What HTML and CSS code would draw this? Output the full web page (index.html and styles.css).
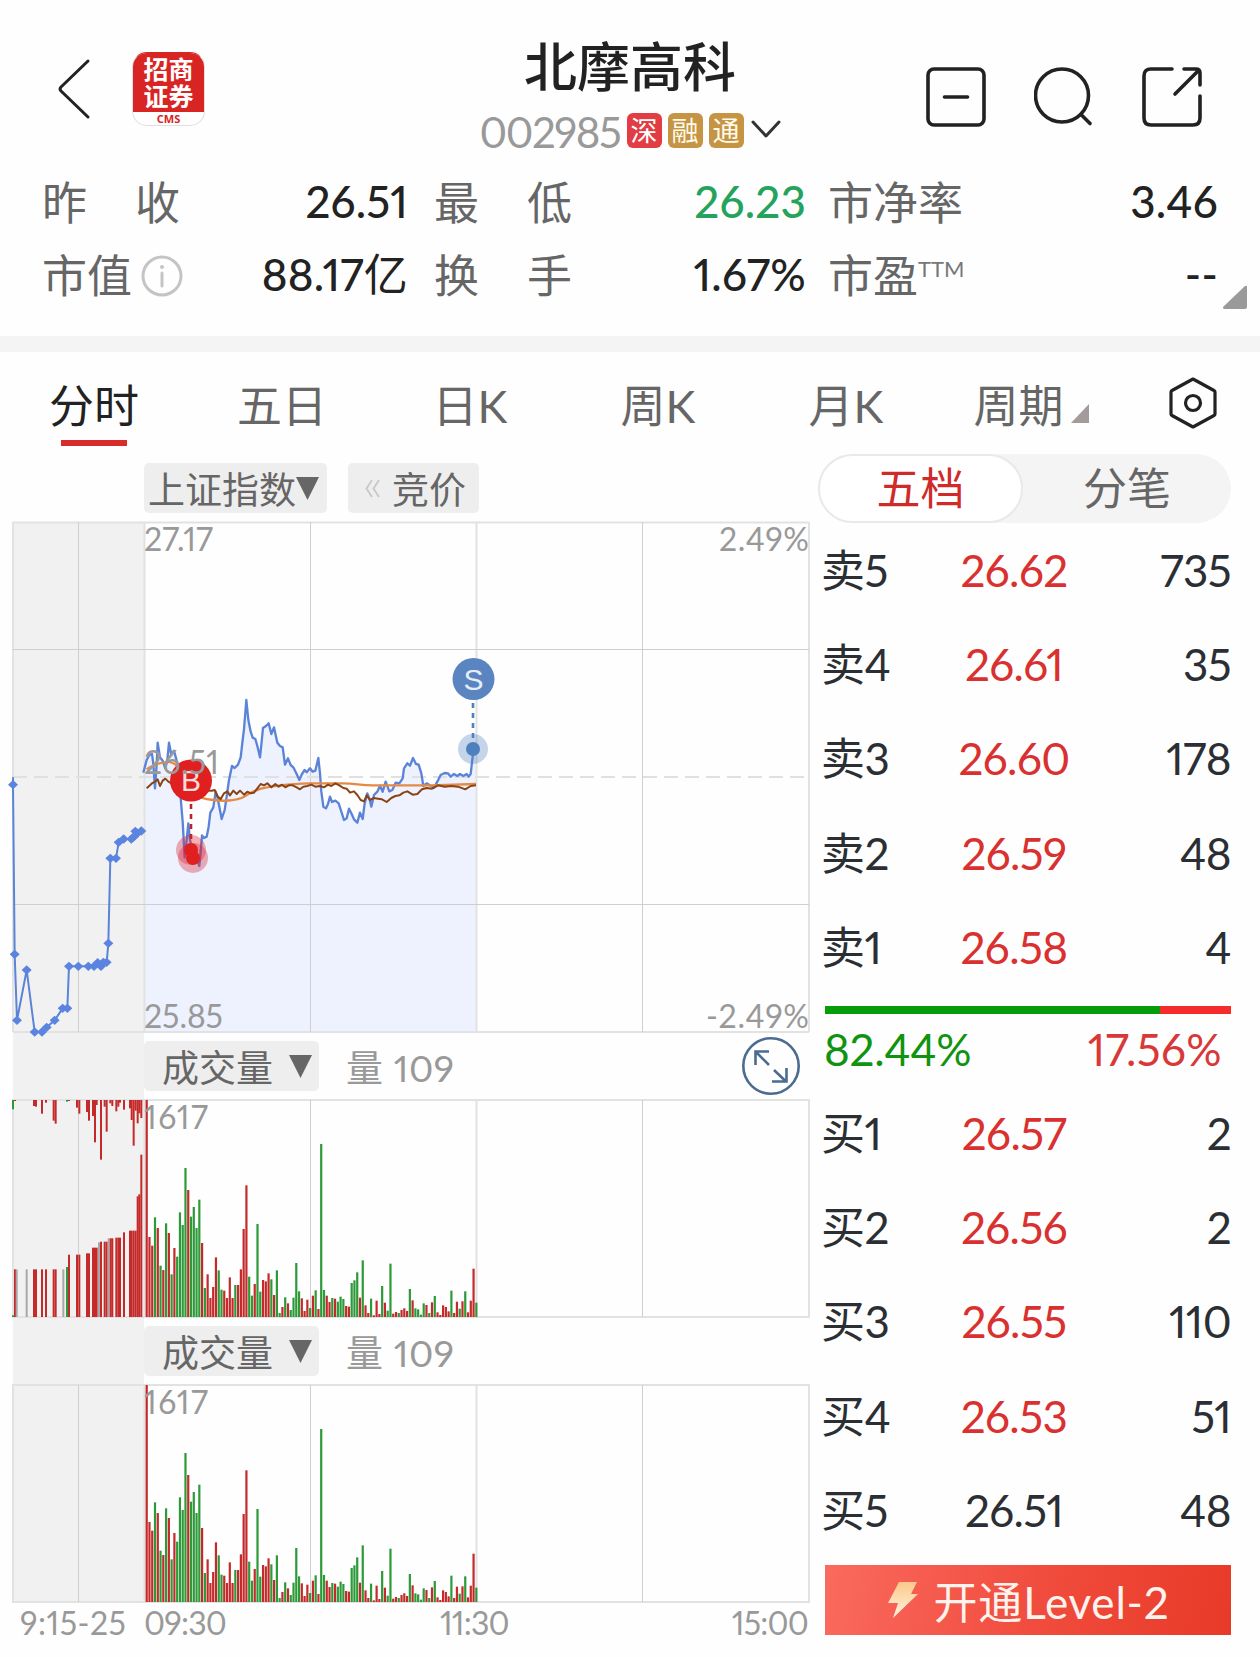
FILE: index.html
```html
<!DOCTYPE html>
<html lang="zh-CN">
<head>
    <meta charset="UTF-8">
    <meta name="viewport" content="width=device-width, initial-scale=1.0">
    <title>北摩高科 002985</title>
    <link rel="stylesheet" href="styles.css">
</head>
<body>
    <header class="topbar">
        <div class="topbar-left">
            <svg class="back" width="34" height="62" viewBox="0 0 34 62" fill="none" stroke="#222" stroke-width="3" stroke-linecap="round" stroke-linejoin="round"><path d="M31 3 L4 29 Q2 31 4 33 L31 59"/></svg>
            <div class="logo">
                <div class="logo-name">招商<br>证券</div>
                <div class="logo-cms">CMS</div>
            </div>
        </div>
        <div class="topbar-title">
            <h1>北摩高科</h1>
            <div class="code-row">
                <span class="code">002985</span>
                <span class="badge badge-red">深</span>
                <span class="badge">融</span>
                <span class="badge">通</span>
                <svg class="chevron" width="30" height="20" viewBox="0 0 30 20" fill="none" stroke="#333" stroke-width="3" stroke-linecap="round" stroke-linejoin="round"><path d="M2 2 L15 16 L28 2"/></svg>
            </div>
        </div>
        <div class="topbar-icons">
            <svg width="62" height="62" viewBox="0 0 62 62" fill="none" stroke="#222" stroke-width="3.6" stroke-linecap="round"><rect x="2" y="3" width="56" height="56" rx="6"/><path d="M18.500 31 H41.500"/></svg>
            <svg width="62" height="62" viewBox="0 0 62 62" fill="none" stroke="#222" stroke-width="3.6" stroke-linecap="round"><circle cx="28" cy="29.5" r="26.5"/><path d="M47 48.500 L56 57.500"/></svg>
            <svg width="62" height="62" viewBox="0 0 62 62" fill="none" stroke="#222" stroke-width="3.6" stroke-linecap="round" stroke-linejoin="round"><path d="M30 3 H9 Q2 3 2 10 V52 Q2 59 9 59 H51 Q58 59 58 52 V30"/><path d="M42 3 H54 Q58 3 58 7 V19 M56 5 L33 28"/></svg>
        </div>
    </header>

    <section class="stats">
        <div class="stat"><span class="stat-label wide"><i>昨</i><i>收</i></span><b>26.51</b></div>
        <div class="stat"><span class="stat-label wide"><i>最</i><i>低</i></span><b class="green">26.23</b></div>
        <div class="stat"><span class="stat-label">市净率</span><b>3.46</b></div>
        <div class="stat">
            <span class="stat-label">市值</span>
            <svg class="info" width="42" height="42" viewBox="0 0 42 42" fill="none" stroke="#c4c4c4" stroke-width="3"><circle cx="21" cy="21" r="19"/><path d="M21 18 V31" stroke-linecap="round"/><circle cx="21" cy="12" r="2" fill="#c4c4c4" stroke="none"/></svg>
            <b>88.17<span class="unit">亿</span></b>
        </div>
        <div class="stat"><span class="stat-label wide"><i>换</i><i>手</i></span><b>1.67%</b></div>
        <div class="stat"><span class="stat-label">市盈</span><span class="ttm">TTM</span><b>--</b></div>
        <svg class="corner" width="24" height="24" viewBox="0 0 24 24" fill="#9a9a9a"><path d="M24 2 V22 Q24 24 22 24 H1 Q0 24 0 22 L22 1 Q24 0 24 2 Z"/></svg>
    </section>

    <nav class="tabs">
        <span class="tab active">分时</span>
        <span class="tab">五日</span>
        <span class="tab">日K</span>
        <span class="tab">周K</span>
        <span class="tab">月K</span>
        <span class="tab tab-more">周期<svg class="tab-corner" width="18" height="19" viewBox="0 0 18 19" fill="#a39a9a"><path d="M18 0 V19 H0 Z"/></svg></span>
        <span class="tab tab-settings">
            <svg width="50" height="54" viewBox="0 0 50 54" fill="none" stroke="#222" stroke-width="3.2" stroke-linejoin="round"><path d="M25 3 L46 14.500 Q47 15 47 16 V38 Q47 39 46 39.500 L25 51 L4 39.500 Q3 39 3 38 V16 Q3 15 4 14.500 Z"/><circle cx="25" cy="27" r="7.500"/></svg>
        </span>
    </nav>

    <main class="main">
        <div class="charts">
            <div class="toolbar">
                <span class="chip chip-index"><i>上证指数</i><svg width="23" height="24" viewBox="0 0 23 24" fill="#666"><path d="M0 1 H23 L11.500 24 Z"/></svg></span>
                <span class="chip chip-auction"><svg width="15" height="19" viewBox="0 0 15 19" fill="none" stroke="#c8c8c8" stroke-width="1.800"><path d="M7 1 L1.500 9.500 L7 18 M14 1 L8.500 9.500 L14 18"/></svg><i>竞价</i></span>
            </div>

            <div class="plots">
                <svg class="plot" width="812" height="510" viewBox="0 522 812 510">
                    <g transform="translate(130 640) scale(.33333)">
                        <path id="priceArea" fill="#edf2fe"/>
                    </g>
                    <g class="grid">
                        <path d="M13 522.5 H809 M13 1032 H809 M13 522 V1032 M144.500 522 V1032 M476.500 522 V1032 M809 522 V1032"/>
                        <path class="thin" d="M13 649.500 H809 M13 904.500 H809 M78.500 522 V1032 M310.500 522 V1032 M642.500 522 V1032"/>
                        <path class="dash" d="M13 777 H809"/>
                    </g>
                    <g transform="translate(130 640) scale(.33333)" fill="none" stroke-linejoin="round">
                        <polyline id="priceLine" stroke="#5b84d8" stroke-width="7"/>
                        <path stroke="#e58a45" stroke-width="7" d="M50 388 C70 372 90 368 115 365 C160 372 165 430 190 455 C205 474 225 478 250 480 C280 484 310 483 335 474 C360 460 370 452 390 447 C430 436 480 432 540 430 H640 C680 431 690 436 730 436 H900 L1038 432"/>
                        <polyline stroke="#8a4313" stroke-width="6" points="50,445 60,436 66,430 75,425 83,418 90,438 98,422 106,416 115,425 124,430 180,450 245,452 254,450 262,468 272,478 282,460 292,454 300,466 310,452 320,462 330,452 342,464 352,455 362,460 372,458 382,445 392,432 402,436 412,430 424,442 436,432 446,440 456,434 466,442 476,436 488,436 500,442 510,448 520,440 532,438 544,434 556,440 570,438 582,442 594,434 604,438 616,430 628,436 640,444 650,446 660,458 672,454 682,465 692,480 702,484 710,466 720,480 732,474 744,476 756,478 770,486 784,474 796,468 808,466 820,458 832,454 848,464 862,462 876,448 890,444 906,446 924,436 944,440 964,438 984,440 1006,448 1022,438 1038,436"/>
                    </g>
                    <g id="auctionLine" transform="translate(0 640) scale(.33333)"></g>

                    <path d="M191 804 V850" stroke="#b8242c" stroke-width="2.600" stroke-dasharray="5 5"/>
                    <circle cx="191" cy="850" r="15" fill="#dc2030" fill-opacity=".35"/>
                    <circle cx="193" cy="858" r="15" fill="#dc2030" fill-opacity=".35"/>
                    <circle cx="191" cy="850" r="7" fill="#e02020"/>
                    <circle cx="193" cy="858" r="7" fill="#e02020"/>
                    <circle cx="191" cy="780.500" r="21" fill="#e02020"/>
                    <text class="marker" x="191" y="791" fill="#fbdcdc">B</text>

                    <path d="M473 703 V740" stroke="#4d80bd" stroke-width="2.600" stroke-dasharray="5 5"/>
                    <circle cx="473" cy="749" r="15" fill="#4d80bd" fill-opacity=".32"/>
                    <circle cx="473" cy="749" r="7" fill="#4d80bd"/>
                    <circle cx="473.500" cy="679" r="21" fill="#5a85c0"/>
                    <text class="marker" x="473.500" y="690" fill="#e6eefa">S</text>

                    <text class="scale" x="144" y="551" textLength="69">27.17</text>
                    <text class="scale" x="144" y="774" textLength="75">26.51</text>
                    <text class="scale" x="144" y="1028" textLength="79">25.85</text>
                    <text class="scale" x="719" y="551" textLength="90">2.49%</text>
                    <text class="scale" x="706" y="1028" textLength="103">-2.49%</text>
                </svg>

                <div class="toolbar">
                    <span class="chip chip-volume"><i>成交量</i><svg width="23" height="24" viewBox="0 0 23 24" fill="#666"><path d="M0 1 H23 L11.500 24 Z"/></svg></span>
                    <span class="volume-now">量 109</span>
                    <svg class="expand" width="60" height="60" viewBox="0 0 60 60" fill="none" stroke="#4b6c90" stroke-width="2.600"><circle cx="30" cy="30" r="27.700"/><path d="M28 29 L14 15 M28 15.500 H14.500 V29 M33 34 L45 45.500 M31 45.500 H45.500 V32"/></svg>
                </div>

                <svg class="plot" width="812" height="217" viewBox="0 0 812 217">
                    <g class="grid">
                        <path d="M13 0 H809 V217 H13 Z M144.500 0 V217 M476.500 0 V217"/>
                        <path class="thin" d="M78.500 0 V217 M310.500 0 V217 M642.500 0 V217"/>
                    </g>
                    <g id="auctionBars"></g>
                    <g class="volume-bars"></g>
                    <text class="scale" x="144" y="29" textLength="64">1617</text>
                </svg>

                <div class="toolbar">
                    <span class="chip chip-volume"><i>成交量</i><svg width="23" height="24" viewBox="0 0 23 24" fill="#666"><path d="M0 1 H23 L11.500 24 Z"/></svg></span>
                    <span class="volume-now">量 109</span>
                </div>

                <svg class="plot" width="812" height="217" viewBox="0 0 812 217">
                    <g class="grid">
                        <path d="M13 0 H809 V217 H13 Z M144.500 0 V217 M476.500 0 V217"/>
                        <path class="thin" d="M78.500 0 V217 M310.500 0 V217 M642.500 0 V217"/>
                    </g>
                    <g class="volume-bars"></g>
                    <text class="scale" x="144" y="29" textLength="64">1617</text>
                </svg>
            </div>

            <div class="axis">
                <span class="auction-time">9:15-25</span>
                <span>09:30</span>
                <span>11:30</span>
                <span>15:00</span>
            </div>
        </div>

        <aside class="book">
            <div class="switch">
                <span class="switch-item on">五档</span>
                <span class="switch-item">分笔</span>
            </div>
            <div class="level"><span>卖5</span><span class="price red">26.62</span><span class="qty">735</span></div>
            <div class="level"><span>卖4</span><span class="price red">26.61</span><span class="qty">35</span></div>
            <div class="level"><span>卖3</span><span class="price red">26.60</span><span class="qty">178</span></div>
            <div class="level"><span>卖2</span><span class="price red">26.59</span><span class="qty">48</span></div>
            <div class="level"><span>卖1</span><span class="price red">26.58</span><span class="qty">4</span></div>
            <div class="ratio-bar"><div class="ratio-sell" style="width: 82.44%"></div></div>
            <div class="ratio-text"><span class="sell">82.44%</span><span class="buy">17.56%</span></div>
            <div class="level"><span>买1</span><span class="price red">26.57</span><span class="qty">2</span></div>
            <div class="level"><span>买2</span><span class="price red">26.56</span><span class="qty">2</span></div>
            <div class="level"><span>买3</span><span class="price red">26.55</span><span class="qty">110</span></div>
            <div class="level"><span>买4</span><span class="price red">26.53</span><span class="qty">51</span></div>
            <div class="level"><span>买5</span><span class="price">26.51</span><span class="qty">48</span></div>
            <div class="level2">
                <svg width="32" height="38" viewBox="0 0 32 38"><defs><linearGradient id="bolt" x1="0" y1="0" x2="0" y2="1"><stop offset="0" stop-color="#fbc98a"/><stop offset="1" stop-color="#fff3e0"/></linearGradient></defs><path fill="url(#bolt)" d="M12 1 H30 L24 13 H31 L6 37 L11 22 H1 Z"/></svg>
                <span>开通Level-2</span>
            </div>
        </aside>
    </main>

    <script>
        const NS = 'http://www.w3.org/2000/svg';
        const RED = '#c52a2a';
        const GREEN = '#2c9a38';
        const GREY = '#a8a8a8';

        function rect(parent, x, y, w, h, color) {
            const el = document.createElementNS(NS, 'rect');
            el.setAttribute('x', x);
            el.setAttribute('y', y);
            el.setAttribute('width', w);
            el.setAttribute('height', h);
            el.setAttribute('fill', color);
            parent.appendChild(el);
        }

        // intraday price
        const price = '40,398 50,360 58,345 66,342 70,372 75,445 80,372 83,308 90,352 98,362 106,385 112,360 117,308 124,345 132,332 140,362 147,395 150,450 158,545 164,652 170,600 175,550 180,600 190,640 200,655 208,678 213,625 216,586 222,594 230,590 236,560 241,518 250,502 257,455 262,470 268,500 275,537 284,510 290,470 297,420 306,378 314,384 324,374 332,352 338,300 342,268 349,180 355,240 362,275 368,293 376,297 382,318 390,352 394,315 399,264 408,258 416,250 424,282 432,262 442,308 450,318 458,322 465,374 474,355 482,375 490,382 500,402 508,420 516,402 524,390 530,397 540,385 548,395 556,392 565,354 570,400 574,455 580,500 588,505 594,492 600,470 606,486 616,482 626,490 634,515 642,540 650,535 657,506 664,520 672,538 682,548 690,518 698,537 704,490 712,460 718,475 724,500 732,465 742,455 750,437 758,455 767,425 778,454 787,450 797,428 808,430 818,415 822,385 832,370 840,377 849,354 858,372 866,374 874,400 880,438 890,430 902,437 912,443 922,425 932,405 944,399 954,400 962,410 972,402 982,408 990,402 1000,408 1010,402 1016,410 1022,402 1028,350 1030,327';
        document.getElementById('priceLine').setAttribute('points', price);
        document.getElementById('priceArea').setAttribute('d', 'M43 1176 L' + price + ' L1038 327 L1038 1176 Z');

        // call auction price
        const auction = [[39,434],[44,943],[51,1141],[80,990],[104,1176],[126,1176],[140,1162],[164,1141],[188,1105],[202,1105],[207,979],[235,979],[265,979],[282,979],[293,968],[303,979],[310,967],[320,967],[325,910],[331,655],[348,655],[356,607],[371,597],[394,597],[402,590],[406,574],[412,580],[424,573]];
        const line = document.createElementNS(NS, 'polyline');
        line.setAttribute('points', '39,412 ' + auction.join(' '));
        line.setAttribute('fill', 'none');
        line.setAttribute('stroke', '#5b84d8');
        line.setAttribute('stroke-width', 6);
        const auctionLine = document.getElementById('auctionLine');
        auctionLine.appendChild(line);
        auction.forEach(([x, y]) => {
            const d = document.createElementNS(NS, 'path');
            d.setAttribute('d', `M${x - 15} ${y} L${x} ${y - 14} L${x + 15} ${y} L${x} ${y + 14} Z`);
            d.setAttribute('fill', '#5b84e0');
            auctionLine.appendChild(d);
        });

        // one entry per minute, 651 is the full height
        const volume = 'r651 r240 r214 g299 r267 g154 r141 g281 r252 g128 r207 g181 g314 g276 g447 r381 g301 g330 g267 g352 r222 g87 r128 r57 r90 r179 g140 g82 r79 r57 r119 r57 g96 r96 r143 r264 r395 g121 g64 r99 g279 g76 r111 r107 r131 g113 r66 g140 g12 r30 g59 r41 g21 g58 g162 g77 r56 r18 r52 g27 r64 g80 r24 g519 g81 r64 r45 g57 r55 g46 g61 g54 r33 r31 g102 g110 g134 r58 g170 r35 r12 g55 r5 r49 r9 g93 r43 g19 g160 r10 r15 g12 r21 r26 r18 g84 r50 g26 g23 g7 g41 r36 g12 r44 g63 r14 r6 r35 r30 r17 g79 r12 r46 g25 r47 g77 r14 r49 r145 g43'.split(' ');
        document.querySelectorAll('.volume-bars').forEach(g => {
            volume.forEach((v, i) => {
                const h = v.slice(1) / 3;
                rect(g, 145.6 + i * 2.77, 217 - h, 2.2, h, v[0] === 'r' ? RED : GREEN);
            });
        });

        // auction: unmatched volume hangs from the top, matched grows from the bottom
        const bars = document.getElementById('auctionBars');
        const colors = { r: RED, g: GREEN, n: GREY };
        const unmatched = '39g28 45r3 102r18 108r20 126r41 138r8 161r62 167r71 201g5 207r3 231r23 238r41 261r36 267r62 279r48 285r127 290r15 303r179 314r20 320r95 331r10 337r18 349r34 355r20 360r8 372r29 390r25 395r60 401r137 407r32 413r70 418r40 424r54';
        const matched = '39g5 45r143 50n143 80n143 102r143 108r143 126r143 138r143 161r143 167r143 190n143 201g150 207r187 231r187 238r187 261r191 267r191 279r208 285r208 290r208 297n224 303r226 314r226 320r226 326n236 332r236 337r236 349r238 355r238 360r238 372r254 390r259 395r259 401r259 407r259 413r362 418r368 424r487';
        function drawAuction(data, fromTop) {
            data.split(' ').forEach(item => {
                const [, x, c, h] = item.match(/(\d+)([rgn])(\d+)/);
                rect(bars, x / 3 - 1, fromTop ? 0 : 217 - h / 3, 2, h / 3, colors[c]);
            });
        }
        drawAuction(unmatched, true);
        drawAuction(matched, false);
    </script>
</body>
</html>
```
FILE: styles.css
```css
* {
    box-sizing: border-box;
}
body {
    margin: 0;
    width: 1260px;
    height: 1657px;
    overflow: hidden;
    background: #fefefe;
    color: #222;
    font-family: Lato, "Noto Sans CJK SC", sans-serif;
    font-variant-numeric: proportional-nums;
}
svg {
    display: block;
    flex: none;
}
i {
    font-style: normal;
}

/* header */
.topbar {
    display: grid;
    grid-template-columns: 1fr auto 1fr;
    height: 166px;
}
.topbar-left {
    display: flex;
    align-items: flex-start;
    padding: 52px 0 0 57px;
}
.back {
    margin-top: 6px;
}
.logo {
    display: flex;
    flex-direction: column;
    width: 73px;
    height: 74px;
    margin-left: 41px;
    border: 1px solid #e2dede;
    border-top-color: #d92424;
    border-radius: 15px;
    overflow: hidden;
    text-align: center;
}
.logo-name {
    height: 60px;
    padding-top: 3px;
    background: #d92424;
    color: #fff;
    font-size: 25px;
    font-weight: 700;
    line-height: 27px;
}
.logo-cms {
    color: #d92424;
    font-family: "Noto Sans", sans-serif;
    font-size: 11px;
    font-weight: 700;
    line-height: 13px;
}
.topbar-title {
    display: flex;
    flex-direction: column;
    align-items: center;
    padding-top: 37px;
}
.topbar-title h1 {
    margin: 0;
    font-size: 53px;
    font-weight: 500;
    line-height: 60px;
}
.code-row {
    display: flex;
    align-items: center;
    height: 36px;
    margin-top: 15px;
}
.code {
    margin-right: 6px;
    padding-top: 3px;
    color: #999;
    font-size: 42px;
    letter-spacing: -1.4px;
    line-height: 40px;
}
.badge {
    width: 35px;
    height: 35px;
    margin-right: 6px;
    border-radius: 6px;
    background: #c59545;
    color: #fffbe8;
    font-size: 27px;
    line-height: 35px;
    text-align: center;
}
.badge-red {
    background: #e23c44;
    color: #fff;
}
.chevron {
    margin-left: 1px;
}
.topbar-icons {
    display: flex;
    justify-content: flex-end;
    gap: 46px;
    padding: 66px 56px 0 0;
}

/* key figures */
.stats {
    position: relative;
    display: grid;
    grid-template-columns: 392px 394px 392px;
    grid-auto-rows: 73px;
    height: 186px;
    padding-left: 42px;
    border-bottom: 16px solid #f4f4f4;
}
.stat {
    display: flex;
    align-items: center;
    font-size: 45px;
    line-height: 60px;
}
.stat:nth-child(3n+1) {
    padding-right: 26px;
}
.stat:nth-child(3n+2) {
    padding-right: 22px;
}
.stat-label {
    padding-top: 1px;
    color: #666;
}
.stat-label.wide {
    display: flex;
    justify-content: space-between;
    width: 138px;
}
.stat b {
    margin-left: auto;
    padding-bottom: 3px;
    font-size: 44px;
    font-weight: 500;
    letter-spacing: .2px;
}
.stat:nth-child(3n) b {
    padding-right: 2px;
}
.unit {
    font-weight: 400;
}
.stat .green {
    color: #25a35c;
}
.info {
    margin-left: 9px;
}
.ttm {
    align-self: flex-start;
    color: #777;
    font-size: 22px;
    line-height: 60px;
}
.corner {
    position: absolute;
    right: 13px;
    bottom: 27px;
}

/* period tabs */
.tabs {
    display: grid;
    grid-template-columns: repeat(6, 188px) 1fr;
    height: 102px;
}
.tab {
    position: relative;
    display: flex;
    align-items: center;
    justify-content: center;
    padding-top: 5px;
    color: #666;
    font-size: 45px;
    line-height: 60px;
}
.tab.active {
    color: #222;
}
.tab.active::after {
    content: "";
    position: absolute;
    bottom: 8px;
    left: 61px;
    width: 66px;
    height: 6px;
    background: #d82c2c;
}
.tab-more {
    padding-right: 6px;
}
.tab-corner {
    margin: 16px 0 0 7px;
}
.tab-settings {
    padding: 0 2px 0 0;
}

/* charts */
.main {
    display: flex;
}
.charts {
    width: 812px;
}
.toolbar {
    display: flex;
    align-items: center;
    height: 68px;
    padding-left: 144px;
}
.chip {
    display: flex;
    align-items: center;
    height: 50px;
    border-radius: 5px;
    background: #eee;
    color: #666;
    font-size: 37px;
    line-height: 50px;
}
.chip i {
    padding-top: 4px;
}
.chip-index {
    width: 183px;
    padding-left: 4px;
}
.chip-auction {
    width: 131px;
    margin-left: 21px;
    padding-left: 17px;
    gap: 12px;
}
.chip-volume {
    width: 175px;
    padding-left: 18px;
    gap: 16px;
}
.volume-now {
    margin-left: 27px;
    padding-top: 4px;
    color: #999;
    font-size: 37px;
    letter-spacing: .6px;
    line-height: 50px;
}
.expand {
    margin-left: auto;
    margin-right: 11px;
}
.plots {
    background: linear-gradient(#f1f1f1, #f1f1f1) 13px 0 / 131px 100% no-repeat;
}
.plot {
    overflow: visible;
}
.grid {
    fill: none;
    stroke: #e2e2e2;
    stroke-width: 2;
}
.grid .thin {
    stroke: #cfcfcf;
    stroke-width: 1;
}
.grid .dash {
    stroke: #e0e0e0;
    stroke-dasharray: 14 7;
}
.scale {
    fill: #999;
    font-size: 32px;
}
.marker {
    font-family: "Liberation Sans", sans-serif;
    font-size: 30px;
    text-anchor: middle;
}
.axis {
    display: grid;
    grid-template-columns: 125px 296px 1fr auto;
    padding: 1px 4px 0 19px;
    color: #999;
    font-size: 32px;
    letter-spacing: -.8px;
    line-height: 40px;
}
.auction-time {
    padding-left: 1px;
    letter-spacing: .5px;
}

/* order book */
.book {
    width: 419px;
    padding-left: 6px;
    color: #2b2f33;
}
.switch {
    display: flex;
    height: 69px;
    border-radius: 35px;
    background: #f4f4f4;
}
.switch-item {
    flex: 1;
    padding-top: 1px;
    color: #666;
    font-size: 44px;
    line-height: 67px;
    text-align: center;
}
.switch-item.on {
    flex: none;
    width: 205px;
    border: 2px solid #e9e9e9;
    border-radius: 35px;
    background: #fff;
    color: #cf2b2b;
    line-height: 63px;
}
.level {
    display: grid;
    grid-template-columns: 120px 146px 1fr;
    align-items: center;
    height: 94.2px;
    padding-left: 3px;
    font-size: 44px;
    letter-spacing: -.6px;
    line-height: 60px;
}
.level .price {
    text-align: center;
}
.level .qty {
    text-align: right;
}
.red {
    color: #d93030;
}
.ratio-bar {
    height: 8px;
    margin: 12px 0 0 7px;
    background: #f62c2c;
}
.ratio-sell {
    height: 100%;
    background: #089c08;
}
.ratio-text {
    display: flex;
    justify-content: space-between;
    height: 72px;
    padding: 0 9px 0 6px;
    font-size: 44px;
    letter-spacing: -.3px;
    line-height: 71px;
}
.sell {
    color: #109410;
}
.buy {
    color: #d93838;
    letter-spacing: .4px;
}
.level2 {
    display: flex;
    align-items: center;
    justify-content: center;
    gap: 15px;
    height: 70px;
    margin: 8px 0 0 7px;
    background: linear-gradient(100deg, #fa6a5e, #f04b3c 55%, #e83a28);
    color: #fff3ee;
    font-size: 44px;
    letter-spacing: .8px;
    line-height: 66px;
}
.level2 span {
    padding-top: 4px;
}
```
